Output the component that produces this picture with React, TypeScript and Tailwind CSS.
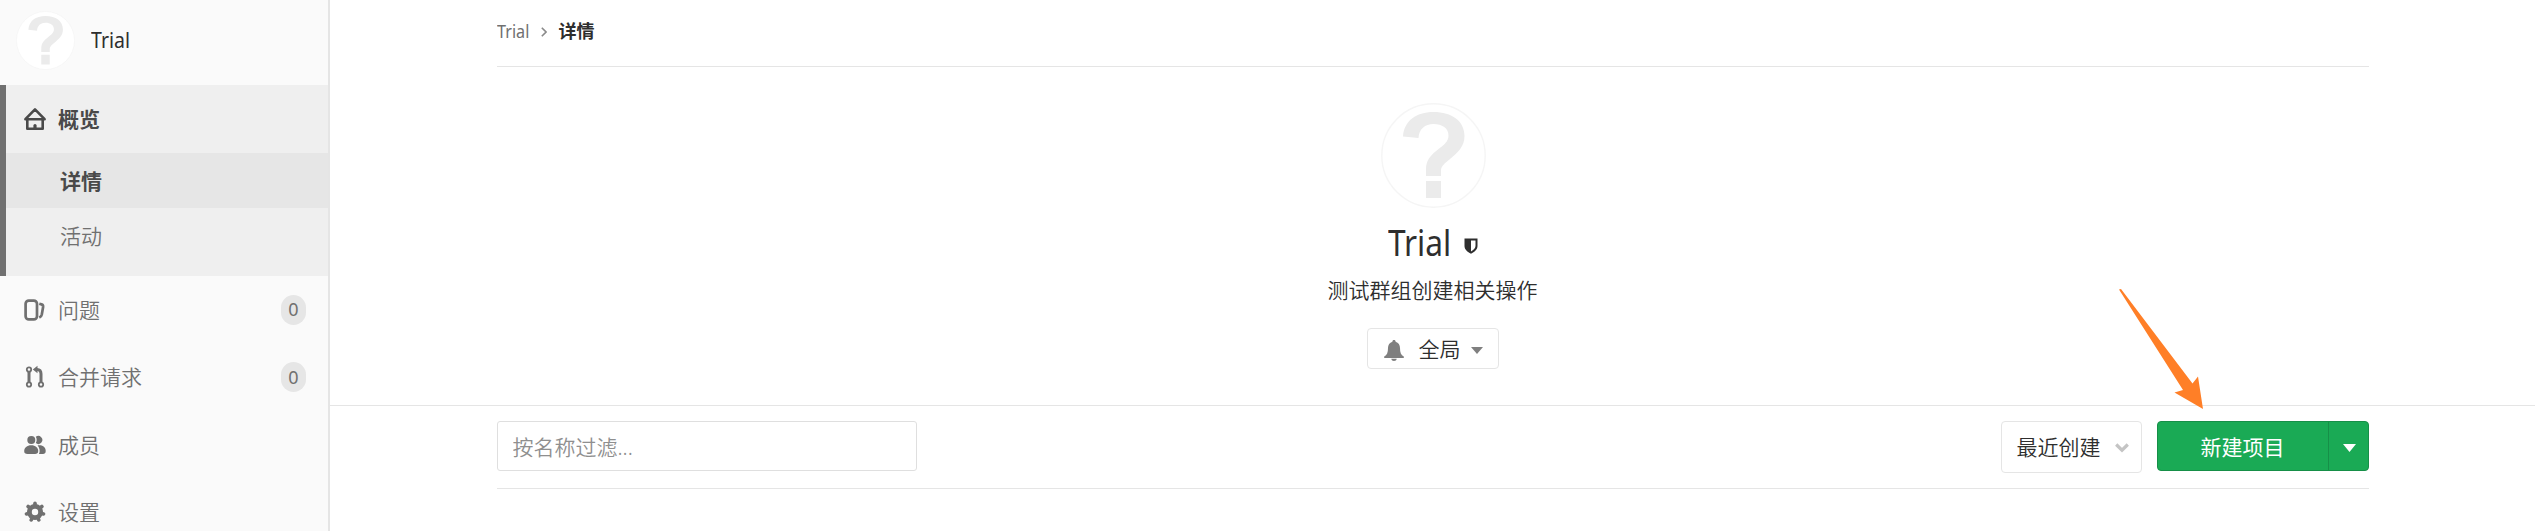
import type { ReactNode } from "react";

function Avatar({ className }: { className: string }) {
  return (
    <svg viewBox="0 0 105 105" className={className} aria-hidden="true">
      <circle cx="52.5" cy="52.5" r="51.7" fill="#fff" stroke="#f5f5f5" strokeWidth="1.4" />
      <path
        fill="#ebebeb"
        d="M22 33.5C23 18 35 9 52.500 9C71 9 83.500 18 83.500 33C83.500 44 76 50 69 56C63 61 60.500 63 60 67V73H45V66C45 57 50 52 57 46.500C63 42 67.500 38.500 67.500 32.500C67.500 25 61 21 52.500 21C44 21 38 26 37.500 35Z M45 78H60V95H45Z"
      />
    </svg>
  );
}

function HomeIcon() {
  return (
    <svg viewBox="0 0 24 24" className="size-6 shrink-0" fill="none" stroke="#4a4a4a" strokeWidth="2.6" strokeLinejoin="round" strokeLinecap="round">
      <path d="M2.400 12.200L12 2.400L21.600 12.200M2.400 12.200H21.600M4.300 12.500V21.700H19.700V12.500" />
      <path d="M12 18.500V21" strokeWidth="3.200" />
    </svg>
  );
}

function IssuesIcon() {
  return (
    <svg viewBox="0 0 24 24" className="size-6 shrink-0" fill="none" stroke="#707070" strokeWidth="2.700">
      <rect x="2.600" y="2.600" width="11.400" height="18.800" rx="3.200" />
      <path d="M16.300 5.800L18.500 6.400C19.800 6.800 20.300 7.600 20.100 9L18.800 16.500C18.500 18 17.800 18.900 16.300 19.600" />
    </svg>
  );
}

function MergeIcon() {
  return (
    <svg viewBox="0 0 24 24" className="size-6 shrink-0" fill="none" stroke="#707070">
      <g strokeWidth="1.800">
        <circle cx="6" cy="4.500" r="2.200" />
        <circle cx="6" cy="19.500" r="2.200" />
        <circle cx="18" cy="19.500" r="2.200" />
      </g>
      <path d="M6 6.500V17.500M18 17.500V9C18 6.300 16.500 4.500 14 4.500H13" strokeWidth="3" />
      <path d="M14.500 0.800V8.200L9.800 4.500Z" fill="#707070" stroke="none" />
    </svg>
  );
}

function MembersIcon() {
  return (
    <svg viewBox="0 0 24 24" className="size-6 shrink-0" fill="#707070">
      <path d="M12.800 3.800A4 4 0 1 1 12.800 10.100C14 8.400 14 5.700 12.800 3.800Z" />
      <path d="M14.600 12.300H16.500C20.500 12.300 22.700 15 22.700 18C22.700 20.300 21.600 21 20 21H16C17.200 18.500 16.800 15 14.600 12.300Z" />
      <circle cx="8.300" cy="7" r="4" />
      <path d="M8.200 12.300C12.500 12.300 15.200 14.800 15.200 18C15.200 20.300 14 21 12 21H4.500C2.300 21 1.200 20.300 1.200 18C1.200 14.800 4 12.300 8.200 12.300Z" />
    </svg>
  );
}

function SettingsIcon() {
  return (
    <svg viewBox="0 0 24 24" className="size-6 shrink-0" fill="none" stroke="#707070">
      <circle cx="12" cy="12" r="5.600" strokeWidth="4.800" />
      <g strokeWidth="3.600" strokeLinecap="round">
        <path d="M12 5V3.200" />
        <path d="M12 5V3.200" transform="rotate(51.430 12 12)" />
        <path d="M12 5V3.200" transform="rotate(102.860 12 12)" />
        <path d="M12 5V3.200" transform="rotate(154.290 12 12)" />
        <path d="M12 5V3.200" transform="rotate(205.710 12 12)" />
        <path d="M12 5V3.200" transform="rotate(257.140 12 12)" />
        <path d="M12 5V3.200" transform="rotate(308.570 12 12)" />
      </g>
    </svg>
  );
}

function NavItem({ icon, label, count }: { icon: ReactNode; label: string; count?: number }) {
  return (
    <li className="flex h-[67.5px] items-center pr-[22px] pl-[23px] text-[#707070]">
      {icon}
      <span className="ml-[11px] text-[21px] leading-[30px]">{label}</span>
      {count !== undefined && (
        <span className="ml-auto flex h-[30px] w-[25px] items-center justify-center rounded-full bg-[#e6e6e6] text-[18px] font-normal">
          {count}
        </span>
      )}
    </li>
  );
}

function Sidebar() {
  return (
    <aside className="h-full w-[330px] shrink-0 overflow-hidden border-r-2 border-[#e5e5e5] bg-[#fafafa]">
      <div className="flex h-[85px] items-center pb-1 pl-4">
        <Avatar className="size-[59px]" />
        <span className="ml-4 origin-left scale-x-93 text-[21px] font-normal text-[#2e2e2e]">Trial</span>
      </div>
      <ul>
        <li className="border-l-6 border-[#707070] bg-[#efefef] pb-[13px]">
          <div className="flex h-[68px] items-center pl-[17px] font-bold text-[#4a4a4a]">
            <HomeIcon />
            <span className="ml-[11px] text-[21px] leading-[30px]">概览</span>
          </div>
          <div className="flex h-[55px] items-center bg-[#e6e6e6] pt-0.5 pl-[54px] text-[21px] font-bold text-[#4a4a4a]">详情</div>
          <div className="flex h-[55px] items-center pt-0.5 pl-[54px] text-[21px] text-[#707070]">活动</div>
        </li>
        <NavItem icon={<IssuesIcon />} label="问题" count={0} />
        <NavItem icon={<MergeIcon />} label="合并请求" count={0} />
        <NavItem icon={<MembersIcon />} label="成员" />
        <NavItem icon={<SettingsIcon />} label="设置" />
      </ul>
    </aside>
  );
}

function GroupHeader() {
  return (
    <section className="flex flex-col items-center pt-9">
      <Avatar className="ml-0.5 size-[105px]" />
      <h1 className="mt-[11px] flex h-12 items-center text-[36px] text-[#2e2e2e]">
        <span className="w-[62px] font-normal">
          <span className="inline-block origin-left scale-x-88">Trial</span>
        </span>
        <svg viewBox="0 0 14 16" className="mt-1.5 ml-[14px] h-4 w-[14px]" fill="#2e2e2e">
          <path fillRule="evenodd" d="M0.500 0.500H13.500V8C13.500 11.500 10.500 14 7 15.800C3.500 14 0.500 11.500 0.500 8ZM7 2.500V13.500C9.500 12 11.500 10.300 11.500 8V2.500Z" />
        </svg>
      </h1>
      <p className="mt-2 text-[21px] leading-[30px] text-[#2e2e2e]">测试群组创建相关操作</p>
      <button className="mt-[23px] flex h-[41px] w-[132px] items-center rounded border border-[#e5e5e5] bg-white pt-[3px] pl-4 text-[21px] text-[#2e2e2e]">
        <svg viewBox="0 0 20 21" className="h-[21px] w-5" fill="#7f7f7f">
          <path d="M10 0C11 0 11.600 .7 11.600 1.700C14.500 2.500 16 5 16 8C16 12.500 17 15 19.800 16.500V18H.2V16.500C3 15 4 12.500 4 8C4 5 5.500 2.500 8.400 1.700C8.400 .7 9 0 10 0ZM7.300 18.700H12.700C12.500 20 11.500 21 10 21C8.500 21 7.500 20 7.300 18.700Z" />
        </svg>
        <span className="ml-[15px]">全局</span>
        <svg viewBox="0 0 12 7" className="ml-[10px] h-[7px] w-3" fill="#7f7f7f">
          <path d="M0 0H12L6 7Z" />
        </svg>
      </button>
    </section>
  );
}

function Toolbar() {
  return (
    <div className="mx-auto flex h-[83px] w-[1872px] items-start border-b border-[#e5e5e5] pt-[15px]">
      <input
        placeholder="按名称过滤..."
        className="h-[50px] w-[420px] rounded-[3px] border border-[#dfdfdf] px-[15px] pt-0.5 text-[21px] placeholder:text-[#8f8f8f]"
      />
      <button className="ml-auto flex h-[52px] w-[141px] items-center rounded border border-[#e5e5e5] pt-0.5 pl-[15px] text-[21px] text-[#2e2e2e]">
        最近创建
        <svg viewBox="0 0 14 10" className="ml-[14px] h-[10px] w-[14px]" fill="none" stroke="#c4c4c4" strokeWidth="3.200">
          <path d="M1.200 1.500L7 7.200L12.800 1.500" />
        </svg>
      </button>
      <div className="relative ml-[15px] flex h-[50px] w-[212px] rounded border border-[#168f48] bg-[#1aaa55]">
        <button className="flex w-[171px] items-center justify-center border-r border-[#168f48] pt-[3px] text-[21px] font-normal text-white">
          新建项目
        </button>
        <button className="flex flex-1 items-center justify-center pl-[3px]" aria-label="展开">
          <svg viewBox="0 0 13 8" className="mt-1 h-2 w-[13px]" fill="#fff">
            <path d="M0 0H13L6.500 8Z" />
          </svg>
        </button>
        <svg viewBox="0 0 84 120" className="absolute -top-[133px] -left-[39px] h-[120px] w-[84px]" fill="#ff7f27">
          <path d="M0 0.500L2 0L73.500 94.500L79 87.500L84 120L55.500 103.500L64 101Z" />
        </svg>
      </div>
    </div>
  );
}

export default function App() {
  return (
    <div className="flex h-[531px] w-[2535px] overflow-hidden bg-white font-['Noto_Sans','Noto_Sans_CJK_SC',sans-serif] font-[350]">
      <Sidebar />
      <main className="min-w-0 flex-1">
        <div className="h-[405px]">
          <nav className="mx-auto flex h-[67px] w-[1872px] items-center border-b border-[#e5e5e5] pb-[3px] text-[18px]">
            <span className="w-[33px] font-normal text-[#707070]">
              <span className="inline-block origin-left scale-x-90">Trial</span>
            </span>
            <svg viewBox="0 0 6 10" className="ml-[11px] h-[10px] w-[6px]" fill="none" stroke="#8a8a8a" strokeWidth="1.600">
              <path d="M.8 .8L5 5L.8 9.200" />
            </svg>
            <span className="ml-3 font-bold text-[#2e2e2e]">详情</span>
          </nav>
          <GroupHeader />
        </div>
        <div className="border-t border-[#e5e5e5]">
          <Toolbar />
        </div>
      </main>
    </div>
  );
}
